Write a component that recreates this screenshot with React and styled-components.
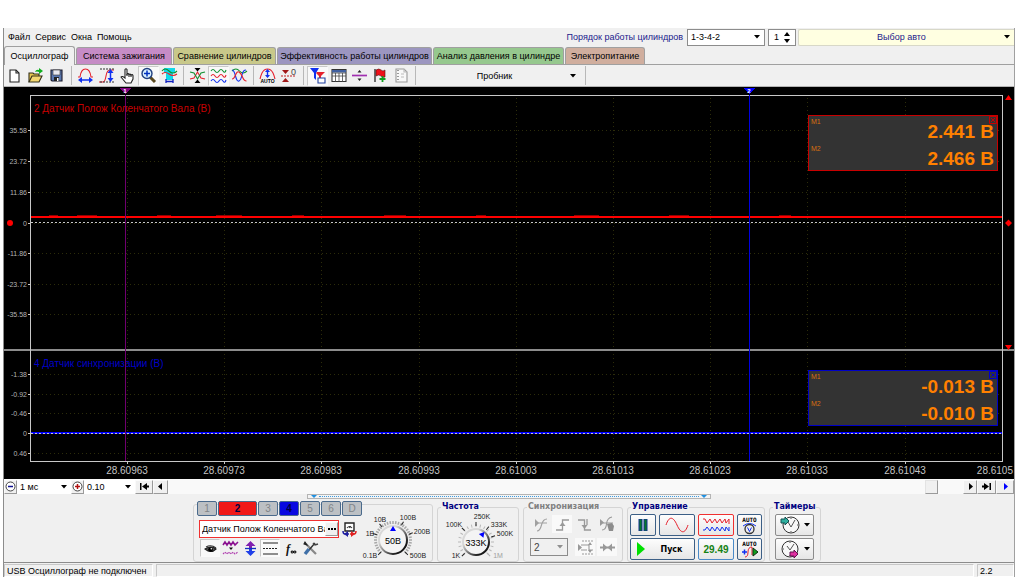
import React from "react";
import styled, { createGlobalStyle } from "styled-components";

const GlobalStyle = createGlobalStyle`
  * {
    box-sizing: border-box;
  }

  body {
    margin: 0;
    background: #ffffff;
    color: #000000;
    font-family: "Liberation Sans", Arial, sans-serif;
    font-size: 9px;
  }

  button, select, input {
    font: inherit;
    color: inherit;
    margin: 0;
    padding: 0;
  }
`;

const Window = styled.div`
  margin: 28px 9px 0 3px;
  border-left: 1px solid #8c8c8c;
  border-right: 1px solid #a0a0a0;
  background: #f0f0f0;
`;

/* menu line */

const MenuBar = styled.header`
  display: flex;
  align-items: center;
  height: 18px;
`;

const Menu = styled.nav`
  display: flex;
  flex: 1;
  gap: 5px;
  padding-left: 4px;
`;

const MenuItem = styled.button`
  border: 0;
  background: none;
`;

const OrderLabel = styled.label`
  color: #1a1a8c;
  margin-right: 4px;
`;

const SelectWrap = styled.div`
  display: grid;
  align-items: center;
  width: ${(props) => props.$width}px;
  height: ${(props) => props.$height || 17}px;
  border: ${(props) => (props.$flat ? "0" : "1px solid #8c8c8c")};
  background: ${(props) => (props.$disabled ? "#f0f0f0" : "#ffffff")};

  select {
    grid-area: 1 / 1;
    width: 100%;
    height: 100%;
    padding-left: 3px;
    border: 0;
    background: none;
    appearance: none;
    opacity: 1;
    color: ${(props) => (props.$disabled ? "#444444" : "#000000")};
    font-size: ${(props) => (props.$disabled ? 10 : 9)}px;
  }

  svg {
    grid-area: 1 / 1;
    justify-self: end;
    margin-right: 4px;
    pointer-events: none;
  }
`;

const Spinner = styled.div`
  display: flex;
  align-items: center;
  justify-content: space-between;
  width: 28px;
  height: 17px;
  margin: 0 2px 0 3px;
  padding: 0 5px;
  border: 1px solid #8c8c8c;
  background: #ffffff;

  input {
    width: 10px;
    border: 0;
    background: none;
  }
`;

const CarButton = styled.button`
  display: flex;
  align-items: center;
  width: 216px;
  height: 17px;
  padding-right: 4px;
  border: 1px solid #d8d8c8;
  border-right: 0;
  border-radius: 2px 0 0 2px;
  background: #ffffe1;
  color: #1a1a8c;

  span {
    flex: 1;
  }
`;

/* tabs and toolbar */

const Tabs = styled.div`
  display: flex;
  align-items: flex-end;
  height: 19px;
  border-bottom: 1px solid #a0a0a0;
`;

const Tab = styled.button`
  width: ${(props) => props.$width}px;
  height: ${(props) => (props.$active ? 19 : 17)}px;
  margin-bottom: ${(props) => (props.$active ? "-1px" : "0")};
  margin-right: 1px;
  border: 1px solid #a0a0a0;
  border-bottom: 0;
  border-radius: 3px 3px 0 0;
  background: ${(props) => props.$color};
  white-space: nowrap;
`;

const ToolBar = styled.div`
  display: flex;
  align-items: center;
  height: 22px;
  border-bottom: 1px solid #b4b4b4;
`;

const Tool = styled.button`
  display: grid;
  place-items: center;
  width: ${(props) => props.$width || 21}px;
  height: ${(props) => props.$height || 20}px;
  border: 1px solid transparent;
  border-color: ${(props) =>
    props.$on ? "#c8c8c8 #fafafa #fafafa #c8c8c8" : "transparent"};
  background: ${(props) => (props.$on ? "#f9f9f9" : "none")};

  &:disabled {
    border-color: transparent;
  }
`;

const Separator = styled.div`
  flex: none;
  width: ${(props) => (props.$wide ? 8 : 7)}px;
  height: 19px;
  background: linear-gradient(#b8b8b8, #b8b8b8) center / 1px 100% no-repeat;
`;

const ProbeButton = styled.button`
  display: flex;
  align-items: center;
  width: 163px;
  height: 20px;
  padding-right: 6px;
  border: 0;
  background: none;

  span {
    flex: 1;
  }
`;

/* chart */

const Scope = styled.main`
  position: relative;
  background: #000000;
`;

const Chart = styled.svg`
  display: block;
  width: 100%;
  height: auto;
`;

const Readout = styled.section`
  position: absolute;
  right: 16px;
  top: ${(props) => props.$top}px;
  width: 190px;
  height: 56px;
  border: 1px solid ${(props) => props.$color};
  background: #333333;
  color: #ff8000;
`;

const ReadoutRow = styled.div`
  display: flex;
  justify-content: space-between;
  height: 27px;
  padding: 2px 3px 0 2px;

  span {
    color: #d87010;
    font-size: 7px;
    line-height: 8px;
  }

  strong {
    font-size: 19px;
    line-height: 28px;
  }
`;

const CloseButton = styled.button`
  position: absolute;
  top: 0;
  right: 0;
  display: block;
  width: 8px;
  height: 8px;
  border: 0;
  background: none;
  color: ${(props) => props.$color};

  svg {
    display: block;
  }
`;

/* scroll line */

const ScrollLine = styled.div`
  display: flex;
  align-items: center;
  height: 15px;
  background: #f9f9f9;
`;

const StepButton = styled.button`
  display: grid;
  place-items: center;
  width: ${(props) => props.$width || 13}px;
  height: 14px;
  border: 1px solid;
  border-color: #fafafa #9a9a9a #9a9a9a #fafafa;
  background: #f0f0f0;
`;

const ScrollTrack = styled.input`
  flex: 1;
  min-width: 0;
  height: 14px;
  appearance: none;
  background: #f9f9f9;

  &::-webkit-slider-thumb {
    appearance: none;
    width: 13px;
    height: 14px;
    border: 1px solid;
    border-color: #e3e3e3 #9a9a9a #9a9a9a #e3e3e3;
    background: #f0f0f0;
  }
`;

const ScrollEnd = styled.div`
  display: flex;
  margin-left: 23px;
`;

/* bottom panel */

const BottomPanel = styled.footer`
  display: flex;
  flex-direction: column;
  align-items: center;
  height: 69px;
  border-bottom: 1px solid #8c8c8c;
`;

const Splitter = styled.button`
  display: flex;
  align-items: center;
  justify-content: space-between;
  width: 404px;
  height: 5px;
  padding: 0 3px;
  border: 1px solid #b4b4b4;
  background: #f4f4f4;

  i {
    flex: 1;
    margin: 0 2px;
    border-top: 1px dotted #3c9be0;
  }
`;

const Groups = styled.div`
  display: flex;
  align-items: flex-end;
  gap: 4px;
  height: 63px;
  padding-right: 4px;
`;

const ChannelGroup = styled.section`
  display: flex;
  width: 240px;
  height: 58px;
  padding-left: 3px;
  border: 1px solid #d4d4d4;
  border-radius: 3px;
`;

const ChannelColumn = styled.div`
  width: 166px;
  margin-top: -4px;
`;

const Channels = styled.div`
  display: flex;
  gap: 1px;
`;

const Channel = styled.button`
  width: ${(props) => (props.$wide ? 39 : 20)}px;
  height: 15px;
  border: 1px solid #4a6a8c;
  border-radius: 2px;
  background: ${(props) => props.$color || "#bcc0c4"};
  color: ${(props) => (props.$color ? "#000040" : "#808488")};
  font-size: 10px;
  font-weight: ${(props) => (props.$color ? "bold" : "normal")};
  line-height: 12px;
`;

const SensorRow = styled.div`
  display: flex;
  align-items: center;
  gap: 2px;
  margin: 4px 0 0 2px;
`;

const SensorBox = styled.div`
  display: flex;
  align-items: center;
  width: 140px;
  height: 18px;
  border: 1px solid #f03030;
  background: #ffffff;

  input {
    flex: 1;
    min-width: 0;
    padding-left: 2px;
    border: 0;
    background: none;
  }
`;

const ToolRow = styled.div`
  display: flex;
  margin: 1px 0 0 3px;
`;

const Group = styled.fieldset`
  width: ${(props) => props.$width}px;
  height: 60px;
  min-width: 0;
  margin: 0;
  padding: 0;
  border: 1px solid #d4d4d4;
  border-radius: 3px;

  legend {
    margin-left: 3px;
    padding: 0 1px;
    color: ${(props) => (props.disabled ? "#808080" : "#000080")};
    font-family: "DejaVu Sans", sans-serif;
    font-size: 8px;
    font-weight: bold;
    line-height: 10px;
  }
`;

const DialSvg = styled.svg`
  display: block;
  overflow: visible;
`;

const SyncRows = styled.div`
  display: flex;
  flex-direction: column;
  gap: 5px;
  padding: 3px 5px 0 6px;
`;

const SyncRow = styled.div`
  display: flex;
  align-items: center;
  justify-content: space-between;
`;

const SyncPair = styled.div`
  display: flex;
  gap: 2px;
`;

const ControlGrid = styled.div`
  display: grid;
  grid-template-columns: 26px 36px 36px 25px;
  grid-auto-rows: 22px;
  gap: 2px 3px;
  padding: 2px 0 0 2px;
`;

const Control = styled.button`
  display: flex;
  align-items: center;
  justify-content: center;
  gap: 4px;
  grid-column: span ${(props) => props.$span || 1};
  padding-left: ${(props) => (props.$span ? 6 : 0)}px;
  border: 1px solid ${(props) => props.$edge || "#3c5f86"};
  border-radius: 2px;
  background: linear-gradient(#fdfdfd, #e6e6e6);
`;

const StartText = styled.strong`
  flex: 1;
  font-family: "DejaVu Sans", sans-serif;
  font-size: 8px;
`;

const Speed = styled.strong`
  color: #148214;
  font-size: 10px;
`;

const Timers = styled.div`
  display: grid;
  grid-auto-rows: 22px;
  gap: 2px;
  padding: 2px 6px 0 5px;
`;

const StatusBar = styled.div`
  display: flex;
  gap: 3px;
  height: 14px;
  padding-top: 1px;
`;

const StatusCell = styled.div`
  flex: ${(props) => (props.$grow ? "1" : "none")};
  width: ${(props) => (props.$width ? `${props.$width}px` : "auto")};
  padding-left: 2px;
  border: 1px solid;
  border-color: #c8c8c8 #ffffff #ffffff #c8c8c8;
  line-height: 13px;
`;

const Caret = ({ color = "#000" }) => (
  <svg width="6" height="4" viewBox="0 0 6 4">
    <path d="M0 0h6L3 3.5z" fill={color} />
  </svg>
);

const Icon = ({ children, size = 17 }) => (
  <svg width={size} height={size} viewBox="0 0 17 17" fill="none" strokeWidth="1.1">
    {children}
  </svg>
);

const RED = "#e6202c";
const BLUE = "#1030f0";
const GREEN = "#109030";

const wave = (y, x = 1) => `M${x} ${y}q2-3 4 0t4 0t4 0t3-1`;

const icons = {
  newFile: (
    <Icon>
      <path d="M4 3h6l3 3v9H4z" fill="#fff" stroke="#222" />
      <path d="M10 3v3h3" stroke="#222" />
    </Icon>
  ),
  open: (
    <Icon>
      <path d="M2 15V6h4l1 1h5v3" fill="#e8c850" stroke="#33301a" />
      <path d="M2 15l3-6h10l-3 6z" fill="#f4d870" stroke="#33301a" />
      <path d="M8 5q1-3 4-2V1l4 3-4 3V5q-2-1-4 0z" fill="#10b020" />
    </Icon>
  ),
  save: (
    <Icon>
      <path d="M3 3h11v11H4l-1-1z" fill="#5a78b0" stroke="#1a1a2a" />
      <path d="M5 3h7v5H5z" fill="#e8e8f0" stroke="#333" strokeWidth=".6" />
      <path d="M6 10h5v4H6z" fill="#222" />
      <path d="M9 11h1.500v3H9z" fill="#fff" />
    </Icon>
  ),
  widthArc: (
    <Icon>
      <path d="M1 10h2Q4 2 8.500 2T14 10h2" stroke={RED} />
      <path d="M3 13h11" stroke={BLUE} strokeWidth="1.500" />
      <path d="M1 13l4-3v6zM16 13l-4-3v6z" fill={BLUE} />
    </Icon>
  ),
  heightArc: (
    <Icon>
      <path d="M1 15h4q2 0 3-6t4-6h4" stroke={RED} />
      <path d="M2 2h14M2 15h14" stroke="#333" strokeDasharray="2 1" />
      <path d="M12.500 4v9" stroke={BLUE} strokeWidth="1.500" />
      <path d="M12.500 2l3 4h-6zM12.500 15l3-4h-6z" fill={BLUE} />
    </Icon>
  ),
  hand: (
    <Icon>
      <path
        d="M6 10V2.500q1-1.500 2 0V7q1-1 2 .5 1.200-1 2 .5 1.500-1 2 .6V12l-2 4H7l-5-6q1-1.500 4 1z"
        fill="#fff"
        stroke="#222"
      />
      <path d="M8 7v2M10 7.500V10M12 8v2" stroke="#222" />
    </Icon>
  ),
  zoom: (
    <Icon>
      <path d="M10 10l5 5" stroke="#5a4a20" strokeWidth="3" />
      <circle cx="7" cy="6.500" r="5" fill="#d8f0ff" stroke="#204080" strokeWidth="1.400" />
      <path d="M4 6.500h6M7 3.500v6" stroke="#0030c0" strokeWidth="1.500" />
    </Icon>
  ),
  shirt: (
    <Icon>
      <path d="M3 1h11v5h-2v7H5V6H3z" fill="#10d8e8" />
      <path d="M1 4q3-4 7 0t8 0" stroke={GREEN} />
      <path d="M1 7q3-3 7 0t8 0" stroke={RED} />
      <path d="M5 14.500h7M5 12v4M12 12v4" stroke="#1020c0" strokeWidth="1.300" />
    </Icon>
  ),
  squeeze: (
    <Icon>
      <path d="M1 12l4-1 3.500-6L12 11l4 1" stroke={RED} />
      <path d="M1 5l4 1 3.500 6L12 6l4-1" stroke={GREEN} />
      <path d="M5.500 1h6l-3 3.500zM5.500 16h6l-3-3.500z" fill="#000" />
    </Icon>
  ),
  waves: (
    <Icon>
      <path d={wave(4)} stroke={GREEN} />
      <path d={wave(9)} stroke={RED} />
      <path d={wave(14)} stroke={BLUE} />
    </Icon>
  ),
  overlap: (
    <Icon>
      <path d="M1 4q4-4 7.500 0T16 4" stroke={GREEN} />
      <path d="M1 3q2 0 3.500 6t3.500 5 3-6 4-5" stroke={BLUE} />
      <path d="M1 12q2 0 3.500-4T8 5t3.500 5 4 4" stroke={RED} />
    </Icon>
  ),
  autoArc: (
    <Icon>
      <path d="M1 12q1-4 2-6 2-4 5.500-4T14 6q1 2 2 6" stroke={RED} />
      <path d="M8.500 4v6" stroke={BLUE} strokeWidth="1.400" />
      <path d="M8.500 2l2.500 3H6zM8.500 11L11 8H6z" fill={BLUE} />
      <text x="8.500" y="16" textAnchor="middle" fontSize="5" fontWeight="bold" fill="#000">AUTO</text>
    </Icon>
  ),
  zero: (
    <Icon>
      <path d="M1 9h15" stroke="#c02020" strokeDasharray="2 1" />
      <path d="M2 3h7L5.500 7zM2 15h7l-3.500-4z" fill="#a01818" />
      <text x="11" y="8" fontSize="9" fill="#444">0</text>
    </Icon>
  ),
  filter: (
    <Icon>
      <path d="M1 1h9L7 6v7l-2-2V6z" fill={BLUE} />
      <path d="M8 5h8l-4 4v3l-2-1V9L7 6z" fill={RED} />
      <path d="M9 11h7v5H9z" fill="#fff" stroke="#2040a0" />
    </Icon>
  ),
  table: (
    <Icon>
      <path d="M2 2.500h14v12H2z" fill="#fff" stroke="#333" />
      <path d="M2 3h14v2.500H2z" fill="#4060a0" />
      <path d="M2 6h14M2 9h14M5.500 6v9M9 6v9M12.500 6v9" stroke="#444" strokeWidth=".8" />
    </Icon>
  ),
  divide: (
    <Icon>
      <path d="M1 8.500h15" stroke="#a030b0" strokeWidth="1.700" />
      <path d="M8.500 3l2 2.500h-4zM8.500 14l2-2.500h-4z" fill="#222" />
    </Icon>
  ),
  flag: (
    <Icon>
      <path d="M3 2v13" stroke="#222" strokeWidth="1.300" />
      <path d="M4 3q3-2 5 0t4 0v7q-2 1-4-1t-5 0z" fill="#f01018" stroke="#501010" strokeWidth=".6" />
      <path d="M10.500 9v6M7.500 12h6" stroke="#10a020" strokeWidth="1.800" />
    </Icon>
  ),
  report: (
    <Icon>
      <path d="M3 2h8l3 3v10H3z" fill="#f8f8f8" stroke="#999" />
      <path d="M5 3v12" stroke="#999" strokeDasharray="1 2" strokeWidth="2" />
      <path d="M11 2v3h3M8 7h3M8 10h3" stroke="#bbb" />
    </Icon>
  ),
  swap: (
    <Icon>
      <path d="M4 2h9v8H4z" fill="#fff" stroke="#222" strokeWidth="1.400" />
      <path d="M6 7q2.500-3 5 0M8.500 7l1-2" stroke="#333" />
      <path d="M8 13H4q-2 0-2-3" stroke="#2020a0" strokeWidth="1.500" />
      <path d="M7 10v6l-4-3z" fill="#2020a0" />
      <path d="M9 13h4q2 0 2-3" stroke="#e02020" strokeWidth="1.500" />
      <path d="M10 10v6l4-3z" fill="#e02020" />
    </Icon>
  ),
  eye: (
    <Icon>
      <path d="M4 7q5-3 10 1" stroke="#333" />
      <path d="M3 9q6-4 11 0-5 5-11 0z" fill="#555" stroke="#222" />
      <circle cx="8.500" cy="9.500" r="2.300" fill="#000" />
      <circle cx="9.300" cy="8.700" r=".8" fill="#fff" />
    </Icon>
  ),
  noise: (
    <Icon>
      <path d="M1 5l2-3 2 3 2-3 2 3 2-3 2 3 3-3" stroke="#8a1090" strokeWidth="1.600" />
      <path d="M7 7.500h4L9 10z" fill="#111" />
      <path d="M1 14l2-2 2 2 2-2 2 2 2-2 2 2 3-2" stroke="#b040b0" strokeDasharray="2 1" />
    </Icon>
  ),
  upDown: (
    <Icon>
      <path d="M8.500 16l-5-5H7V6h3v5h3.500z" fill="#2040e8" />
      <path d="M8.500 1l5 5H10v3H7V6H3.500z" fill="#8020b0" />
      <path d="M3 8.500h11" stroke="#1030c0" strokeWidth="1.300" />
    </Icon>
  ),
  lines: (
    <Icon>
      <path d="M1 3h15M1 14h15" stroke="#222" />
      <path d="M1 8.500h15" stroke="#222" strokeDasharray="2 1" />
    </Icon>
  ),
  formula: (
    <Icon>
      <text x="4" y="13" fontFamily="Liberation Serif" fontSize="12" fontStyle="italic" fontWeight="bold" fill="#111">f</text>
      <path d="M9 12q1-2 2.500 0t2.500 0q-1-2-2.500 0T9 12" stroke="#111" />
    </Icon>
  ),
  tools: (
    <Icon>
      <path d="M4 4l10 10" stroke="#888" strokeWidth="2.200" />
      <path d="M3 2l2 3-3-1z" fill="#222" stroke="#222" />
      <path d="M13 3L7 10" stroke="#333" strokeWidth="1.400" />
      <path d="M7 9l-4 5" stroke="#4070a8" strokeWidth="3.400" />
      <path d="M11 3l2 2 3-1" stroke="#444" strokeWidth="1.500" />
    </Icon>
  ),
  slope: (
    <Icon>
      <path d="M3 3v8l4-4z" fill="#a0a0a0" />
      <path d="M6 7h9M5 15q3 0 4.500-6T15 3" stroke="#a0a0a0" />
    </Icon>
  ),
  rise: (
    <Icon>
      <path d="M2 14h6.500V4H15" stroke="#999" strokeWidth="1.300" />
      <path d="M8.500 6l3 4h-6z" fill="#999" />
    </Icon>
  ),
  fall: (
    <Icon>
      <path d="M2 4h6.500v10H15M11 3v6" stroke="#999" strokeWidth="1.300" />
      <path d="M8.500 13l3-4h-6z" fill="#999" />
    </Icon>
  ),
  slopeHand: (
    <Icon>
      <path d="M2 3v7l4-3.500z" fill="#999" />
      <path d="M4 14q4 0 4.500-6T14 1M5 7h10" stroke="#999" />
      <path d="M9 8l5-1 2 3-1 5h-4z" fill="#8c8c8c" />
    </Icon>
  ),
  level: (
    <Icon>
      <path d="M5 2h11M5 15h11" stroke="#999" strokeDasharray="2 1" />
      <path d="M1 5v7l4-3.500z" fill="#999" />
      <path d="M4 6h8v5h4M4 11h6" stroke="#999" />
      <path d="M13 3l2 3h-4zM13 14l2-3h-4z" fill="#999" />
    </Icon>
  ),
  meet: (
    <Icon>
      <path d="M1 8.500h15" stroke="#999" strokeWidth="2" />
      <path d="M4 4.500l4.500 4-4.500 4zM13 4.500l-4.500 4 4.500 4z" fill="#999" />
    </Icon>
  ),
};

const MinusPlus = ({ plus }) => {
  const color = plus ? "#b01010" : "#101090";
  return (
    <svg width="11" height="11" viewBox="0 0 11 11" fill="none">
      <circle cx="5.500" cy="5.500" r="4.500" fill="#fff" stroke="#444" />
      <path d="M3 5.500h5" stroke={color} strokeWidth="1.500" />
      {plus && <path d="M5.500 3v5" stroke={color} strokeWidth="1.500" />}
    </svg>
  );
};

const Arrow = ({ color = "#000", left, bar }) => (
  <svg width="9" height="7" viewBox="0 0 9 7" fill={color}>
    <g transform={left ? "matrix(-1 0 0 1 9 0)" : undefined}>
      <path d={bar ? "M0 2.500h2V0l5 3.500L2 7V4.500H0zM7.500 0H9v7H7.500z" : "M3 0l4 3.500L3 7z"} />
    </g>
  </svg>
);

const columns = [
  [123, "28.60963"],
  [220, "28.60973"],
  [317, "28.60983"],
  [415, "28.60993"],
  [512, "28.61003"],
  [609, "28.61013"],
  [706, "28.61023"],
  [803, "28.61033"],
  [901, "28.61043"],
];

const rows = [
  [43, "35.58"],
  [74, "23.72"],
  [105, "11.86"],
  [136, "0"],
  [166, "-11.86"],
  [197, "-23.72"],
  [227, "-35.58"],
  [287, "-1.38"],
  [307, "-0.92"],
  [326, "-0.46"],
  [346, "0"],
  [366, "0.46"],
];

const ScopeChart = () => (
  <Chart viewBox="0 0 1010 392" shapeRendering="crispEdges">
    <g stroke="#2c2c0a" strokeDasharray="1 3">
      {columns.map(([x]) => (
        <path key={x} d={`M${x + 0.5} 11V374`} />
      ))}
      {rows.map(([y], i) => (
        <path key={i} d={`M30 ${y + 0.5}H998`} />
      ))}
    </g>
    <g fill="#b4b4b4" fontSize="7" textAnchor="end">
      {rows.map(([y, label], i) => (
        <text key={i} x="23" y={y + 3}>{label}</text>
      ))}
    </g>
    <g fill="#c4c4c4" fontSize="10" textAnchor="middle">
      {columns.map(([x, label]) => (
        <text key={x} x={x} y="387">{label}</text>
      ))}
      <text x="1009" y="387" textAnchor="end">28.6105</text>
    </g>
    <g fontSize="10">
      <text x="30" y="25" fill="#c80000">2 Датчик Полож Коленчатого Вала (В)</text>
      <text x="30" y="280" fill="#0000c8">4 Датчик синхронизации (В)</text>
    </g>
    <path d="M0 263H1010" stroke="#8c8c8c" strokeWidth="2" />
    <path d="M26.500 374V8.500H998.500V374.500H26" fill="none" stroke="#c8c8c8" />
    <path
      d={rows.map(([y]) => `M24 ${y + 0.5}h2`).join("") + columns.map(([x]) => `M${x + 0.5} 375v2`).join("")}
      stroke="#c8c8c8"
    />
    <path d="M27 130H998" stroke="#ff0000" strokeWidth="2" />
    <path d="M45 128.500h9m19 0h20m60 0h14m45 0h26m50 0h12m80 0h22m70 0h10m88 0h25m70 0h20m90 0h12" stroke="#900000" />
    <path d="M27 346H998" stroke="#0000ff" strokeWidth="2" />
    <path d="M27 135.500H998M27 346.500H998" stroke="#c8c8c8" strokeDasharray="2 2" />
    <path d="M121.500 8V374" stroke="#700070" />
    <path d="M745.500 8V374" stroke="#0000e0" />
    <path d="M115 1h12l-6 6z" fill="#800080" />
    <path d="M739 1h12l-6 6z" fill="#0000ff" />
    <g fill="#fff" fontSize="6" fontWeight="bold" textAnchor="middle">
      <text x="121" y="6">1</text>
      <text x="745" y="6">2</text>
    </g>
    <g fill="#ff0000" shapeRendering="auto">
      <circle cx="6" cy="136" r="3" />
      <path d="M1001 13h7l-3.500-5zM1001 258h7l-3.500 5zM1001 136l3.500-3.500 3.500 3.500-3.500 3.500z" />
    </g>
  </Chart>
);

const ReadoutBox = ({ top, color, values }) => (
  <Readout $top={top} $color={color}>
    {values.map((value, i) => (
      <ReadoutRow key={i}>
        <span>M{i + 1}</span>
        <strong>{value}</strong>
      </ReadoutRow>
    ))}
    <CloseButton $color={color} aria-label="Закрыть">
      <svg width="8" height="8" viewBox="0 0 8 8" fill="none" stroke="currentColor">
        <path d="M.5.5h7v7h-7zM2 2l4 4M6 2L2 6" />
      </svg>
    </CloseButton>
  </Readout>
);

/* a knob with a ring of ticks; angles count clockwise from the top */
const Dial = ({ width, height, cx, cy, r, value, pointer, marks, dense }) => {
  const ring = [];
  for (let a = -135; a <= 135; a += dense ? 9 : 15) ring.push(a);
  return (
    <DialSvg width={width} height={height} viewBox={`0 0 ${width} ${height}`}>
      <defs>
        <linearGradient id={`knob${r}`} x1="0" y1="0" x2="1" y2="1">
          <stop offset="0.3" stopColor="#d8d8d8" />
          <stop offset="0.8" stopColor="#181818" />
        </linearGradient>
      </defs>
      {ring.map((a) => (
        <path
          key={a}
          d={`M${cx} ${cy - r - 1}v-3`}
          transform={`rotate(${a} ${cx} ${cy})`}
          stroke={dense ? "#a8a8a8" : "#b8b8b8"}
          strokeWidth={dense ? 1.5 : 1}
        />
      ))}
      {marks.map((m) => (
        <path
          key={m.label}
          d={`M${cx} ${cy - r - 2}v-4`}
          transform={`rotate(${m.angle} ${cx} ${cy})`}
          stroke={m.off ? "#b0b0b0" : "#222"}
        />
      ))}
      <circle cx={cx} cy={cy} r={r - 1} fill="#f4f4f4" stroke={`url(#knob${r})`} strokeWidth="2" />
      <path d={`M${cx - 3} ${cy - r + 6}h6l-3-5z`} transform={`rotate(${pointer} ${cx} ${cy})`} fill="#0000ff" />
      <text x={cx} y={cy + 4} textAnchor="middle" fontSize="9">{value}</text>
      {marks.map((m) => (
        <text key={m.label} x={m.x} y={m.y} textAnchor="middle" fontSize="7" fill={m.off ? "#a0a0a0" : "#222"}>
          {m.label}
        </text>
      ))}
    </DialSvg>
  );
};

const voltMarks = [
  { label: "0.1В", x: 8, y: 53, angle: -135 },
  { label: "1В", x: 8, y: 31, angle: -72 },
  { label: "10В", x: 18, y: 17, angle: -40 },
  { label: "100В", x: 46, y: 15, angle: 30 },
  { label: "200В", x: 60, y: 29, angle: 70 },
  { label: "500В", x: 56, y: 53, angle: 135 },
];

const rateMarks = [
  { label: "1K", x: 18, y: 46, angle: -135 },
  { label: "100K", x: 16, y: 15, angle: -45 },
  { label: "250K", x: 44, y: 7, angle: 0 },
  { label: "333K", x: 61, y: 15, angle: 40 },
  { label: "500K", x: 67, y: 24, angle: 72 },
  { label: "1M", x: 60, y: 46, angle: 135, off: true },
];

const tabs = [
  ["Осциллограф", 71, "#f0f0f0"],
  ["Система зажигания", 96, "#c68cc6"],
  ["Сравнение цилиндров", 103, "#c8c88a"],
  ["Эффективность работы цилиндров", 155, "#9c96c0"],
  ["Анализ давления в цилиндре", 131, "#96c88e"],
  ["Электропитание", 80, "#d0ae9e"],
];

const toolGroups = [
  [["newFile"], ["open"], ["save"]],
  [["widthArc"], ["heightArc"], ["hand"], ["zoom", true], ["shirt"]],
  [["squeeze"], ["waves", true], ["overlap"]],
  [["autoArc"], ["zero"]],
  [["filter", true], ["table"], ["divide"], ["flag"], ["report"]],
];

const channels = [["1"], ["2", "#f01818"], ["3"], ["4", "#0808e0"], ["5"], ["6"], ["D"]];

const App = () => {
  return (
    <>
      <GlobalStyle />
      <Window>
        <MenuBar>
          <Menu>
            {["Файл", "Сервис", "Окна", "Помощь"].map((item) => (
              <MenuItem key={item}>{item}</MenuItem>
            ))}
          </Menu>
          <OrderLabel htmlFor="order">Порядок работы цилиндров</OrderLabel>
          <SelectWrap $width={78}>
            <select id="order">
              <option>1-3-4-2</option>
            </select>
            <Caret />
          </SelectWrap>
          <Spinner>
            <input defaultValue="1" aria-label="Цилиндр" />
            <svg width="6" height="11" viewBox="0 0 6 11">
              <path d="M0 4h6L3 0zM0 7h6l-3 4z" />
            </svg>
          </Spinner>
          <CarButton>
            <span>Выбор авто</span>
            <Caret />
          </CarButton>
        </MenuBar>

        <Tabs role="tablist">
          {tabs.map(([title, width, color], i) => (
            <Tab key={title} role="tab" $width={width} $color={color} $active={i === 0}>
              {title}
            </Tab>
          ))}
        </Tabs>

        <ToolBar>
          {toolGroups.map((group, i) => (
            <React.Fragment key={i}>
              {group.map(([name, on]) => (
                <Tool key={name} $on={on} aria-label={name}>
                  {icons[name]}
                </Tool>
              ))}
              <Separator $wide={i === 0 || i === 3} />
            </React.Fragment>
          ))}
          <ProbeButton>
            <span>Пробник</span>
            <Caret />
          </ProbeButton>
          <Separator />
        </ToolBar>

        <Scope>
          <ScopeChart />
          <ReadoutBox top={28} color="#c80000" values={["2.441 В", "2.466 В"]} />
          <ReadoutBox top={283} color="#0000c8" values={["-0.013 В", "-0.010 В"]} />
        </Scope>

        <ScrollLine>
          <StepButton aria-label="Уменьшить">
            <MinusPlus />
          </StepButton>
          <SelectWrap $width={54} $height={14} $flat>
            <select aria-label="Развертка">
              <option>1 мс</option>
            </select>
            <Caret />
          </SelectWrap>
          <StepButton aria-label="Увеличить">
            <MinusPlus plus />
          </StepButton>
          <SelectWrap $width={51} $height={14} $flat>
            <select aria-label="Масштаб">
              <option>0.10</option>
            </select>
            <Caret />
          </SelectWrap>
          <StepButton $width={18} aria-label="В начало">
            <Arrow left bar />
          </StepButton>
          <StepButton $width={15} aria-label="Назад">
            <Arrow left />
          </StepButton>
          <ScrollTrack type="range" max="1000" defaultValue="998" aria-label="Прокрутка" />
          <ScrollEnd>
            <StepButton $width={14} aria-label="Вперед">
              <Arrow />
            </StepButton>
            <StepButton $width={19} aria-label="В конец">
              <Arrow bar />
            </StepButton>
            <StepButton $width={18} aria-label="Воспроизвести">
              <Arrow color="#0000ff" />
            </StepButton>
          </ScrollEnd>
        </ScrollLine>

        <BottomPanel>
          <Splitter aria-label="Свернуть панель">
            <svg width="6" height="3" viewBox="0 0 6 3">
              <path d="M0 0h6L3 3z" fill="#2090e0" />
            </svg>
            <i />
            <svg width="6" height="3" viewBox="0 0 6 3">
              <path d="M0 0h6L3 3z" fill="#2090e0" />
            </svg>
          </Splitter>
          <Groups>
            <ChannelGroup>
              <ChannelColumn>
                <Channels>
                  {channels.map(([name, color]) => (
                    <Channel key={name} $color={color} $wide={name === "2"}>
                      {name}
                    </Channel>
                  ))}
                </Channels>
                <SensorRow>
                  <SensorBox>
                    <input defaultValue="Датчик Полож Коленчатого Вала" aria-label="Датчик" />
                    <StepButton aria-label="Выбрать датчик">
                      <svg width="8" height="2" viewBox="0 0 8 2">
                        <path d="M0 0h2v2H0zM3 0h2v2H3zM6 0h2v2H6z" />
                      </svg>
                    </StepButton>
                  </SensorBox>
                  {icons.swap}
                </SensorRow>
                <ToolRow>
                  {["eye", "noise", "upDown", "lines", "formula", "tools"].map((name) => (
                    <Tool key={name} $width={20} $height={18} $on={name === "eye" || name === "lines"} aria-label={name}>
                      {icons[name]}
                    </Tool>
                  ))}
                </ToolRow>
              </ChannelColumn>
              <Dial width={70} height={56} cx={31} cy={35} r={15} value="50В" pointer={0} marks={voltMarks} dense />
            </ChannelGroup>

            <Group $width={82}>
              <legend>Частота</legend>
              <Dial width={80} height={48} cx={38} cy={30} r={14} value="333K" pointer={40} marks={rateMarks} />
            </Group>

            <Group $width={100} disabled>
              <legend>Синхронизация</legend>
              <SyncRows>
                <SyncRow>
                  {["slope", "rise", "fall", "slopeHand"].map((name) => (
                    <Tool key={name} $width={20} $height={18} $on={name === "rise"} aria-label={name}>
                      {icons[name]}
                    </Tool>
                  ))}
                </SyncRow>
                <SyncRow>
                  <SelectWrap $width={38} $height={18} $disabled>
                    <select aria-label="Канал синхронизации">
                      <option>2</option>
                    </select>
                    <Caret color="#909090" />
                  </SelectWrap>
                  <SyncPair>
                    <Tool $width={20} $height={18} $on aria-label="level">
                      {icons.level}
                    </Tool>
                    <Tool $width={20} $height={18} $on aria-label="meet">
                      {icons.meet}
                    </Tool>
                  </SyncPair>
                </SyncRow>
              </SyncRows>
            </Group>

            <Group $width={138}>
              <legend>Управление</legend>
              <ControlGrid>
                <Control aria-label="Пауза">
                  <svg width="10" height="12" viewBox="0 0 10 12">
                    <path d="M1 0h3v12H1zM6 0h3v12H6z" fill="#087828" stroke="#103090" />
                  </svg>
                </Control>
                <Control aria-label="Синус">
                  <svg width="24" height="16" viewBox="0 0 24 16" fill="none" stroke={RED}>
                    <path d="M1 8C4-1 8-1 12 8s8 9 11 0" />
                  </svg>
                </Control>
                <Control $edge="#f03030" aria-label="Сигналы">
                  <svg width="28" height="16" viewBox="0 0 28 16" fill="none">
                    <path d="M1 2h2l2 4 3-4 2 4 3-4 2 4 3-4 2 4 3-4 1 4 3-4v5" stroke={RED} />
                    <path d="M1 13h2l2-3 3 4 2-4 3 4 2-4 3 4 2-4 3 4 1-4 3 4v-4" stroke={BLUE} />
                  </svg>
                </Control>
                <Control aria-label="Авто вольт">
                  <svg width="19" height="19" viewBox="0 0 19 19" fill="none">
                    <text x="9.500" y="6" textAnchor="middle" fontFamily="DejaVu Sans Mono" fontSize="6" fontWeight="bold" fill="#000">AUTO</text>
                    <path d="M3 10q6.500-5 13 0" stroke={BLUE} />
                    <circle cx="9.500" cy="13" r="4.500" stroke="#333" strokeWidth="1.300" />
                    <path d="M7.500 11.500l2 4 2-4" stroke={BLUE} />
                  </svg>
                </Control>
                <Control $span={2}>
                  <svg width="8" height="14" viewBox="0 0 8 14">
                    <path d="M0 0l8 7-8 7z" fill="#00e000" />
                  </svg>
                  <StartText>Пуск</StartText>
                </Control>
                <Control $edge="#4a8ac8">
                  <Speed>29.49</Speed>
                </Control>
                <Control aria-label="Авто пуск">
                  <svg width="19" height="19" viewBox="0 0 19 19" fill="none">
                    <text x="9.500" y="6" textAnchor="middle" fontFamily="DejaVu Sans Mono" fontSize="6" fontWeight="bold" fill="#000">AUTO</text>
                    <path d="M5 17q3 0 3-5t4-5v8" stroke={RED} />
                    <path d="M2 12h5M4.500 9.500v5" stroke={BLUE} strokeWidth="1.500" />
                    <path d="M13 8l5 4-5 4z" fill="#10a020" stroke="#103010" />
                  </svg>
                </Control>
              </ControlGrid>
            </Group>

            <Group $width={52}>
              <legend>Таймеры</legend>
              <Timers>
                <Control $edge="#8c8c8c" aria-label="Таймер пуска">
                  <svg width="20" height="18" viewBox="0 0 20 18" fill="none">
                    <circle cx="11" cy="9" r="8" fill="#f8f8f8" stroke="#333" />
                    <path d="M8 6l3 5 4-7M11 2v1M11 15v1M17 9h1" stroke="#555" />
                    <path d="M1 3h4V1l4 4-4 4V7H1z" fill="#30b0a0" stroke="#105050" />
                  </svg>
                  <Caret />
                </Control>
                <Control $edge="#8c8c8c" aria-label="Таймер останова">
                  <svg width="20" height="18" viewBox="0 0 20 18" fill="none">
                    <circle cx="10" cy="9" r="8" fill="#f8f8f8" stroke="#333" />
                    <path d="M7 6l3 4 4-6M10 2v1M3 9h1M10 15v1" stroke="#555" />
                    <path d="M10 12h4v-2l4 4-4 4v-2h-4z" fill="#e030a0" stroke="#601050" />
                  </svg>
                  <Caret />
                </Control>
              </Timers>
            </Group>
          </Groups>
        </BottomPanel>

        <StatusBar>
          <StatusCell $width={149}>USB Осциллограф не подключен</StatusCell>
          <StatusCell $grow />
          <StatusCell $width={37}>2.2</StatusCell>
        </StatusBar>
      </Window>
    </>
  );
};

export default App;
